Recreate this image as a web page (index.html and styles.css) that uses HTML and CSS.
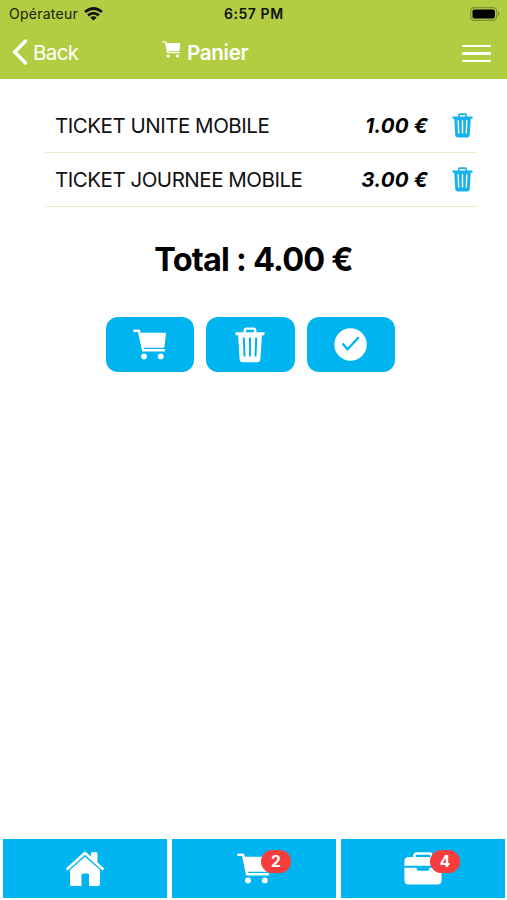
FILE: index.html
```html
<!DOCTYPE html>
<html lang="fr">
<head>
<meta charset="utf-8">
<title>Panier</title>
<link rel="stylesheet" href="styles.css">
</head>
<body>
<svg class="defs" width="0" height="0">
  <symbol id="cart" viewBox="0 0 34 31">
    <path d="M1.5 1.7H6L10.2 21.2H31" fill="none" stroke="currentColor" stroke-width="2.5" stroke-linecap="round" stroke-linejoin="round"/>
    <path d="M6.5 3.8H33L31.5 17.3Q31.3 18.7 30 18.7H9.5Z" fill="currentColor"/>
    <circle cx="11" cy="27.4" r="2.9" fill="currentColor"/><circle cx="27.8" cy="27.4" r="2.9" fill="currentColor"/>
  </symbol>
  <symbol id="trash" viewBox="0 0 30 36">
    <path d="M9.8 6V3.2Q9.8 1.6 11.4 1.6H18.6Q20.2 1.6 20.2 3.2V6" fill="none" stroke="currentColor" stroke-width="2.4"/>
    <path fill="currentColor" fill-rule="evenodd" d="M1 5.2H29Q30 5.2 29.6 6.4L29.2 8.2H26.9L25.4 32.2Q25.1 35.2 22.2 35.2H7.8Q4.9 35.2 4.6 32.2L3.1 8.2H.8L.4 6.4Q0 5.2 1 5.2ZM7.8 10.5L8.5 29.5H10.5L9.8 10.5ZM14 10.5V29.5H16V10.5ZM20.2 10.5L19.5 29.5H21.5L22.2 10.5Z"/>
  </symbol>
</svg>
<div class="app">
  <header class="header">
    <div class="status">
      <span class="carrier">Opérateur</span>
      <svg class="wifi" viewBox="0 0 19 14"><g fill="none" stroke="#111" stroke-width="2.8"><path d="M1.1 5Q9.5-2 17.9 5"/><path d="M4.1 8.4Q9.5 3.8 14.9 8.4"/></g><path d="M9.5 13.6L6.3 10.5Q9.5 8 12.7 10.5Z" fill="#111"/></svg>
      <span class="clock">6:57 PM</span>
      <svg class="battery" viewBox="0 0 30 14"><rect x=".7" y=".7" width="26" height="12.6" rx="3.6" fill="none" stroke="#7f9233" stroke-width="1.2"/><rect x="2.5" y="2.4" width="22.4" height="9.2" rx="1.8"/><path d="M28 4.5Q31 7 28 9.5Z" fill="#7f9233"/></svg>
    </div>
    <nav class="nav">
      <a class="back"><svg viewBox="0 0 16 26"><path d="M13.5 2L2.7 13L13.5 24" fill="none" stroke="#fff" stroke-width="3.4" stroke-linecap="round" stroke-linejoin="round"/></svg><span>Back</span></a>
      <h1 class="title"><svg><use href="#cart"/></svg><span>Panier</span></h1>
      <div class="menu"><i></i><i></i><i></i></div>
    </nav>
  </header>
  <main class="main">
    <ul class="list">
      <li><span class="name">TICKET UNITE MOBILE</span><span class="price">1.00 €</span><svg><use href="#trash"/></svg></li>
      <li><span class="name">TICKET JOURNEE MOBILE</span><span class="price">3.00 €</span><svg><use href="#trash"/></svg></li>
    </ul>
    <h2 class="total">Total : 4.00 €</h2>
    <div class="actions">
      <button><svg class="cart"><use href="#cart"/></svg></button>
      <button><svg class="trash"><use href="#trash"/></svg></button>
      <button><svg class="check" viewBox="0 0 33 33"><circle cx="16.5" cy="16.5" r="16.2" fill="#fff"/><path d="M8.5 15.5L13.5 21.3L24.8 9.2" fill="none" stroke="#00b4ef" stroke-width="2.3"/></svg></button>
    </div>
  </main>
  <footer class="tabs">
    <a><svg class="home" viewBox="0 0 38 36"><path d="M1.5 17.8L19 2L36.5 17.8" fill="none" stroke="#fff" stroke-width="2.7" stroke-linecap="round" stroke-linejoin="round"/><path d="M25.5 6V1.8H31V11Z" fill="#fff" stroke="#fff" stroke-linejoin="round"/><path d="M4 19L19 5.7L34 19V33Q34 35 32 35H23V24Q23 22.6 21.6 22.6H16.9Q15.5 22.6 15.5 24V35H6Q4 35 4 33Z" fill="#fff"/></svg></a>
    <a><svg class="cart"><use href="#cart"/></svg><span class="badge">2</span></a>
    <a><svg class="bag" viewBox="0 0 38 33"><path d="M10.5 6V3.5Q10.5 1.5 12.5 1.5H25.5Q27.5 1.5 27.5 3.5V6" fill="none" stroke="#fff" stroke-width="2.4"/><path d="M.4 13.8V9.5Q.4 5 5 5H33Q37.6 5 37.6 9.5V13.8ZM.4 15.8H12.5L13 17.7Q13.2 18.8 14.5 18.8H23.5Q24.8 18.8 25 17.7L25.5 15.8H37.6V28Q37.6 32.5 33 32.5H5Q.4 32.5 .4 28Z" fill="#fff"/></svg><span class="badge">4</span></a>
  </footer>
</div>
</body>
</html>
```
FILE: styles.css
```css
* { box-sizing: border-box; }
body { margin: 0; background: #fff; color: #000; font-family: Inter, "Liberation Sans", sans-serif; }
svg { display: block; flex: none; }
.defs { position: absolute; }
.app { width: 507px; height: 900px; display: flex; flex-direction: column; overflow: hidden; }
.header { height: 79px; background: #b2cd42; flex: none; }
.status { height: 27px; display: flex; align-items: center; padding-left: 9px; color: #1c2108; white-space: nowrap; }
.carrier { width: 75px; font-size: 14px; letter-spacing: .25px; }
.wifi { width: 19px; height: 14px; }
.clock { margin-left: 121px; width: 60px; font-size: 14px; font-weight: 600; letter-spacing: .55px; color: #111; }
.battery { width: 30px; height: 14px; margin-left: 186px; }
.nav { height: 50px; display: flex; align-items: center; color: #fff; }
.back { display: flex; align-items: center; margin-left: 12px; width: 150px; font-size: 20.5px; letter-spacing: -.6px; }
.back svg { width: 16px; height: 26px; margin-right: 5px; }
.title { margin: 0; display: flex; align-items: center; font-size: 20.5px; font-weight: 600; letter-spacing: -.25px; }
.title svg { width: 19px; height: 17px; margin: -6px 6px 0 0; }
.menu { margin: 3px 16px 0 auto; width: 29px; display: flex; flex-direction: column; gap: 5px; }
.menu i { height: 2.4px; background: #fff; border-radius: 1px; }
.main { flex: 1; padding-top: 20px; }
.list { list-style: none; width: 432px; margin: 0 0 0 45px; padding: 0; }
.list li { height: 54px; border-bottom: 1px solid #e9ecca; display: flex; align-items: center; padding: 0 4px 1px 10px; font-size: 20.5px; color: #111; }
.name { flex: 1; white-space: nowrap; letter-spacing: -.48px; }
.price { font-weight: 700; font-style: italic; margin-right: 24px; white-space: nowrap; letter-spacing: .2px; color: #000; }
.list svg { width: 21px; height: 25px; margin-top: 1px; color: #16b2eb; }
.total { margin: 29px 0 0; height: 48px; line-height: 48px; text-align: center; font-size: 32.5px; font-weight: 700; letter-spacing: -.8px; white-space: nowrap; }
.actions { display: flex; gap: 12px; margin: 33px 0 0 106px; }
.actions button { width: 88.3px; height: 55px; border: 0; border-radius: 12px; padding: 0; background: #00b4ef; display: flex; align-items: center; justify-content: center; color: #fff; }
.cart { width: 34px; height: 31px; }
.trash { width: 30px; height: 36px; }
.check { width: 33px; height: 33px; }
.tabs { height: 61px; display: grid; grid-template-columns: repeat(3, 164px); gap: 5px; padding: 0 0 2px 3px; flex: none; color: #fff; }
.tabs a { position: relative; background: #00b4ef; display: flex; align-items: center; justify-content: center; }
.home { width: 38px; height: 36px; }
.tabs .bag { width: 38px; height: 33px; }
.badge { position: absolute; left: 89px; top: 11px; width: 30px; height: 23px; border-radius: 12px; background: #f53d3d; font-size: 15.5px; font-weight: 700; line-height: 23px; text-align: center; }
```
